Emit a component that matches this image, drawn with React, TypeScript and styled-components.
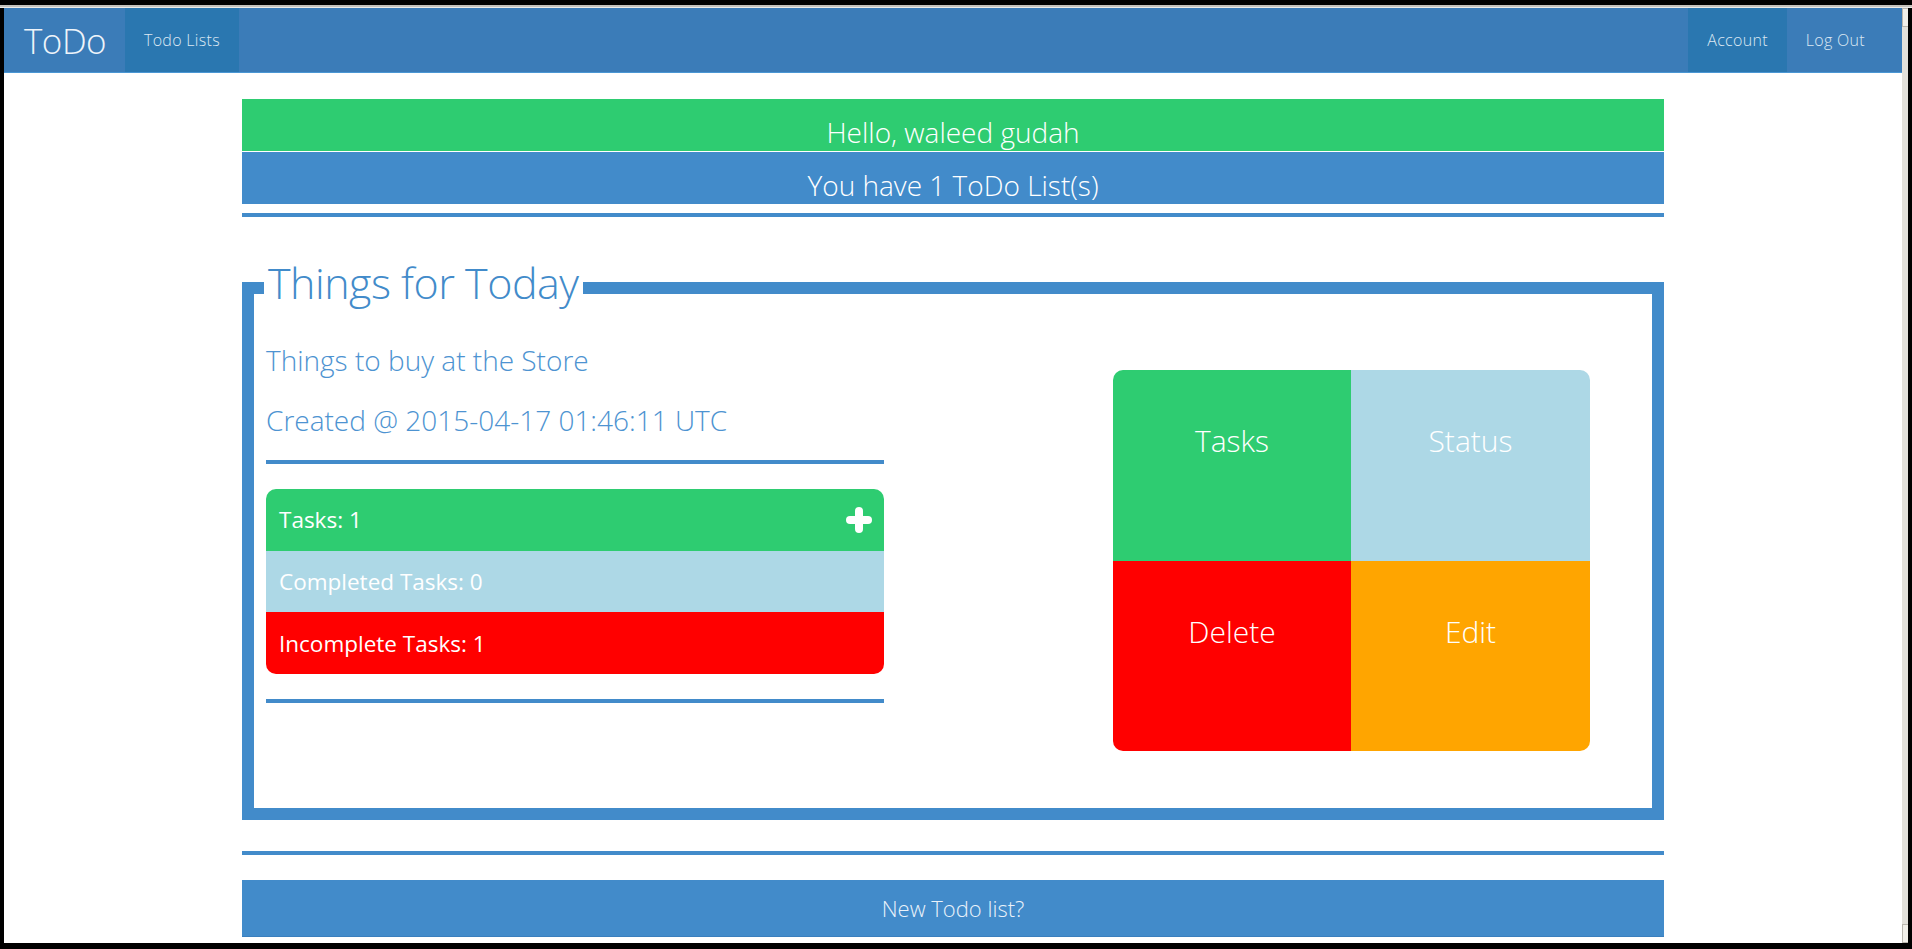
import React from "react";
import styled, { createGlobalStyle } from "styled-components";

const FONT = `"Open Sans", "Noto Sans", "Liberation Sans", Arial, sans-serif`;
const BLUE = "#428bca";

const Global = createGlobalStyle`
  html, body { margin: 0; padding: 0; background: #000; overflow: hidden; }
  *, *::before, *::after { box-sizing: border-box; }
  body { font-family: ${FONT}; }
`;

const Screen = styled.div`
  width: 1912px;
  height: 949px;
  background: #000;
  padding: 5px 4px 6px 4px;
  display: flex;
  flex-direction: column;
`;

const TopEdge = styled.div`
  height: 3px;
  margin: 0 -4px;
  background: linear-gradient(#c4c1bb 0 2px, #ecebe8 2px);
`;

const Window = styled.div`
  flex: 1;
  min-height: 0;
  display: flex;
`;

const Viewport = styled.div`
  flex: 1;
  background: #fff;
  overflow: hidden;
  display: flex;
  flex-direction: column;
`;

const Scrollbar = styled.div`
  width: 6px;
  background: #e2e0da;
  display: flex;
  flex-direction: column;
  justify-content: space-between;
`;

const ScrollButton = styled.div`
  height: 19px;
  background: #f1efe9;
  border: 1px solid #b9b6ae;
  border-right: none;
`;

const Nav = styled.nav`
  height: 65px;
  flex: none;
  background: #3b7cb8;
  border-bottom: 1px solid #4a97d4;
  display: flex;
  align-items: stretch;
  font-family: ${FONT};
  font-weight: 300;
`;

const Brand = styled.div`
  width: 121px;
  padding-left: 20px;
  display: flex;
  align-items: center;
  font-size: 35px;
  color: #eef4fa;
  letter-spacing: -0.5px;
`;

const NavLink = styled.div<{ $active?: boolean }>`
  padding: 0 19px;
  display: flex;
  align-items: center;
  font-size: 16px;
  letter-spacing: 0.3px;
  color: #dce8f3;
  background: ${(p) => (p.$active ? "#2a77b0" : "transparent")};
`;

const NavSpacer = styled.div`
  flex: 1;
`;

const NavRight = styled.div`
  display: flex;
  padding-right: 18px;
`;

const Container = styled.main`
  width: 1422px;
  margin: 0 auto;
  padding-top: 26px;
  font-family: ${FONT};
  font-weight: 300;
`;

const Banner = styled.div<{ $bg: string }>`
  height: 52px;
  margin-bottom: 1px;
  padding-top: 19px;
  background: ${(p) => p.$bg};
  color: #fff;
  text-align: center;
  font-size: 28px;
  line-height: 28px;
  overflow: hidden;
`;

const Rule = styled.hr<{ $mt?: number; $mb?: number }>`
  height: 4px;
  border: none;
  background: ${BLUE};
  margin: ${(p) => p.$mt ?? 0}px 0 ${(p) => p.$mb ?? 0}px;
`;

const Panel = styled.fieldset`
  margin: 44px 0 0;
  padding: 25px 12px 57px;
  border: 12px solid ${BLUE};
  min-width: 0;
`;

const PanelTitle = styled.legend`
  margin-left: -2px;
  padding: 0 4px 10px;
  font-size: 43px;
  line-height: 44px;
  color: ${BLUE};
  font-weight: 300;
  letter-spacing: -0.5px;
`;

const PanelBody = styled.div`
  display: grid;
  grid-template-columns: 618px 477px;
  column-gap: 229px;
  align-items: start;
`;

const LeftCol = styled.div`
  display: flex;
  flex-direction: column;
`;

const Subtitle = styled.p`
  margin: 0 0 20px;
  font-size: 28px;
  line-height: 40px;
  color: #4d93d1;
  font-weight: 300;
  white-space: nowrap;
`;

const StatList = styled.div`
  height: 185px;
  border-radius: 10px;
  overflow: hidden;
  display: flex;
  flex-direction: column;
`;

const StatRow = styled.div<{ $bg: string }>`
  flex: 1;
  background: ${(p) => p.$bg};
  display: flex;
  align-items: center;
  justify-content: space-between;
  padding: 0 12px 0 13px;
  color: #fff;
  font-size: 22.5px;
  font-weight: 400;
`;

const Tiles = styled.div`
  margin-top: 30px;
  display: grid;
  grid-template-columns: 238px 239px;
  grid-template-rows: 191px 190px;
  border-radius: 10px;
  overflow: hidden;
`;

const Tile = styled.div<{ $bg: string }>`
  background: ${(p) => p.$bg};
  padding-top: 51px;
  text-align: center;
  color: #fff;
  font-size: 30px;
  line-height: 40px;
  font-weight: 300;
`;

const NewButton = styled.div`
  margin-top: 25px;
  height: 57px;
  background: ${BLUE};
  border-bottom: 1px solid #3a7fbe;
  display: flex;
  align-items: center;
  justify-content: center;
  color: #eaf2fa;
  font-size: 22px;
`;

const PlusIcon = () => (
  <svg width="26" height="26" viewBox="0 0 26 26" aria-hidden="true">
    <g stroke="#fff" strokeWidth="8" strokeLinecap="round">
      <line x1="4" y1="13" x2="22" y2="13" />
      <line x1="13" y1="4" x2="13" y2="22" />
    </g>
  </svg>
);

export default function App() {
  return (
    <>
      <Global />
      <Screen>
        <TopEdge />
        <Window>
          <Viewport>
            <Nav>
              <Brand>ToDo</Brand>
              <NavLink $active>Todo Lists</NavLink>
              <NavSpacer />
              <NavRight>
                <NavLink $active>Account</NavLink>
                <NavLink>Log Out</NavLink>
              </NavRight>
            </Nav>
            <Container>
              <Banner $bg="#2ecc71">Hello, waleed gudah</Banner>
              <Banner $bg={BLUE}>You have 1 ToDo List(s)</Banner>
              <Rule $mt={9} />
              <Panel>
                <PanelTitle>Things for Today</PanelTitle>
                <PanelBody>
                  <LeftCol>
                    <Subtitle>Things to buy at the Store</Subtitle>
                    <Subtitle>Created @ 2015-04-17 01:46:11 UTC</Subtitle>
                    <Rule $mb={25} />
                    <StatList>
                      <StatRow $bg="#2ecc71">
                        <span>Tasks: 1</span>
                        <PlusIcon />
                      </StatRow>
                      <StatRow $bg="#add8e6">
                        <span>Completed Tasks: 0</span>
                      </StatRow>
                      <StatRow $bg="#ff0000">
                        <span>Incomplete Tasks: 1</span>
                      </StatRow>
                    </StatList>
                    <Rule $mt={25} />
                  </LeftCol>
                  <Tiles>
                    <Tile $bg="#2ecc71">Tasks</Tile>
                    <Tile $bg="#add8e6">Status</Tile>
                    <Tile $bg="#ff0000">Delete</Tile>
                    <Tile $bg="#ffa500">Edit</Tile>
                  </Tiles>
                </PanelBody>
              </Panel>
              <Rule $mt={31} />
              <NewButton>New Todo list?</NewButton>
            </Container>
          </Viewport>
          <Scrollbar>
            <ScrollButton />
            <ScrollButton />
          </Scrollbar>
        </Window>
      </Screen>
    </>
  );
}
